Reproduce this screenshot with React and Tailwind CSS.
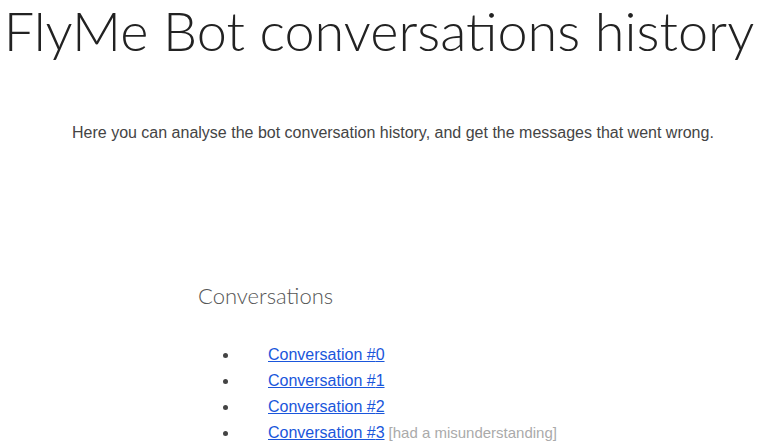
export default function App() {
  const items = [0, 1, 2, 3];
  return (
    <div className="w-[758px] h-[448px] overflow-hidden bg-white">
      <div className="flex justify-center">
        <h1 className="whitespace-nowrap text-[54px] leading-[64px] font-light text-[#222] font-['Lato',sans-serif] -mt-[1px]">
          FlyMe Bot conversations history
        </h1>
      </div>
      <p className="mt-[60px] pl-[72px] text-[16px] leading-[20px] text-[#444] font-['Liberation_Sans',Arial,sans-serif]">
        Here you can analyse the bot conversation history, and get the messages that went wrong.
      </p>
      <h2 className="mt-[139px] pl-[198px] text-[22px] leading-[28px] font-light text-[#555] font-['Lato',sans-serif]">
        Conversations
      </h2>
      <ul className="mt-[32px] pl-[222px] list-none text-[16px] leading-[26px] font-['Liberation_Sans',Arial,sans-serif] text-[#444]">
        {items.map((i) => (
          <li key={i} className="flex items-center">
            <span className="w-[5px] h-[5px] rounded-full bg-[#444] ml-[1px] mr-[40px]"></span>
            <a href="#" className="text-[#1a56db] underline">Conversation #{i}</a>
            {i === 3 && <span className="text-[#aaa] text-[15px] ml-[4px]">[had a misunderstanding]</span>}
          </li>
        ))}
      </ul>
    </div>
  );
}
